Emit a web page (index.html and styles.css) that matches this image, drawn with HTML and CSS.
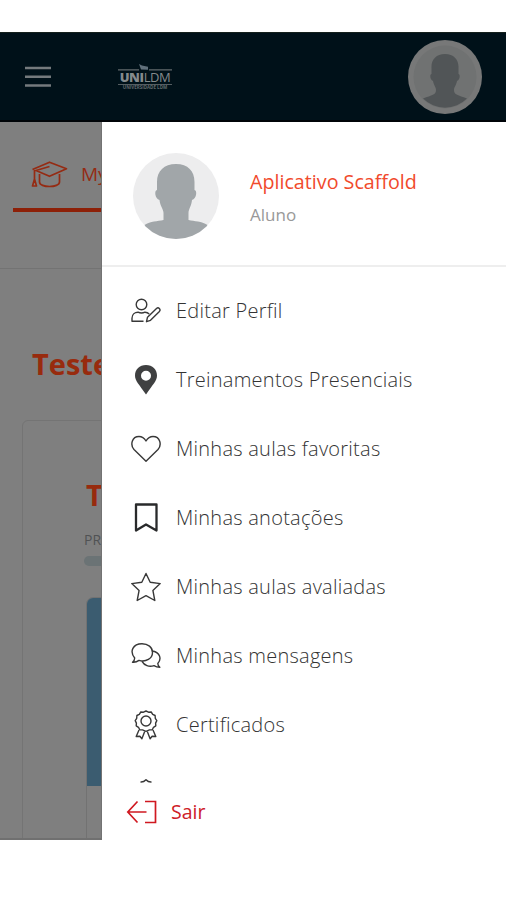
FILE: index.html
```html
<!DOCTYPE html>
<html lang="pt-BR">
<head>
<meta charset="utf-8">
<title>UNILDM</title>
<link rel="stylesheet" href="styles.css">
</head>
<body>
<div class="app">
  <header class="topbar">
    <svg class="burger" viewBox="0 0 26 22"><path d="M0 2h26M0 10.800h26M0 19.500h26"/></svg>
    <div class="brand">
      <svg class="brand-mark" viewBox="0 0 54 7"><path d="M0 5.800h21M31 5.800h23" stroke="#62696c" stroke-width="1.2"/><path d="M21 0l3 1.500 6 1.300v3l-7-.2z" fill="#60707b"/></svg>
      <div class="brand-name"><b>UNI</b><span>LDM</span></div>
      <div class="brand-sub">UNIVERSIDADE LDM</div>
    </div>
    <svg class="avatar-small" viewBox="0 0 74 74"><circle cx="37" cy="37" r="37" fill="#777878"/><circle cx="37" cy="37" r="31.500" fill="#707272"/><path d="M37 14c-9 0-14 6-13.500 14v6c-2 0-1.500 6 1.500 7 1 5 3 6 3 9 0 5-4 5-13 8.500a31 31 0 0 0 44 0C50 55 46 55 46 50c0-3 2-4 3-9 3-1 3.500-7 1.500-7v-6c.5-8-4.500-14-13.500-14z" fill="#515557"/></svg>
  </header>
  <div class="body">
    <main class="page">
      <div class="tab">
        <svg class="cap" viewBox="0 0 36 28"><path d="M1 8.500L18 1.200l17 6.600-17 7.500L4.500 9.500 18 5.500M3 9v9M3 18l-2 7h4zM8 13v8c0 6 20 6 20 0v-8"/></svg>
        <span>My</span>
      </div>
      <h1>Teste</h1>
      <section class="card">
        <h2>Teste</h2>
        <div class="progress-label">PROGRESSO</div>
        <div class="progress"></div>
        <div class="course"><div class="cover"></div></div>
      </section>
    </main>
    <aside class="drawer">
      <div class="profile">
        <svg class="avatar" viewBox="0 0 86 86"><defs><clipPath id="disc"><circle cx="43" cy="43" r="43"/></clipPath></defs><circle cx="43" cy="43" r="43" fill="#ededee"/><path clip-path="url(#disc)" d="M43 11C31 11 24 18 24 29v8c-3 0-2 9 2.500 10 .5 6 4 9 4 13v7c-6 1.500-13 1-19 5v14h63V72c-6-4-13-3.500-19-5v-7c0-4 3-7 3.500-13 4.500-1 5.500-10 2.500-10v-8c0-11-6.500-18-18.500-18z" fill="#a1a6a9"/></svg>
        <div><div class="name">Aplicativo Scaffold</div><div class="role">Aluno</div></div>
      </div>
      <nav class="menu">
        <a class="item"><svg viewBox="0 0 30 30"><circle cx="10.500" cy="8.500" r="5.300"/><path d="M12.500 25.200H1v-3c0-4 3-6 6-6 2 1 5 1 7 0 1.800 0 3.200.7 4.200 1.800M15.500 25.700l1-4.500 9-8.700c2-1.800 4.600.8 2.900 2.900l-8.900 8.900z"/></svg><span>Editar Perfil</span></a>
        <a class="item"><svg viewBox="0 0 30 30"><path fill="#3f4041" fill-rule="evenodd" stroke="none" d="M15 0C8.500 0 4 4.500 4 10.500 4 16 8 19 15 29.500 22 19 26 16 26 10.500 26 4.500 21.500 0 15 0zm0 5.800a5 5 0 1 1 0 10 5 5 0 0 1 0-10z"/></svg><span>Treinamentos Presenciais</span></a>
        <a class="item"><svg viewBox="0 0 30 30"><path d="M15 27.300L3 15.500C-1 11 .8 2.500 8 2.500c3.500 0 5.500 2 7 4.500 1.500-2.500 3.500-4.500 7-4.500 7.200 0 9 8.500 5 13z"/></svg><span>Minhas aulas favoritas</span></a>
        <a class="item"><svg viewBox="0 0 30 30"><path class="bold" d="M5 1.500h20.500v26L15 21.500 5 27.500z"/></svg><span>Minhas anotações</span></a>
        <a class="item"><svg viewBox="0 0 30 30"><path d="M15 1.500l4.200 8.700 10 1.400-7.300 6.800 1.900 10.100-8.800-4.800-8.800 4.800 1.900-10.100L.8 11.600l10-1.400z"/></svg><span>Minhas aulas avaliadas</span></a>
        <a class="item"><svg viewBox="0 0 30 30"><path d="M3.700 17C-1.800 10.500 2 2.700 11 2.700c6 0 10.500 3.600 10.500 8.700 0 6-6.500 10-13.500 8-2 1.500-4.300 2-6.500 1.800 1.500-1.200 2.200-2.500 2.200-4.200zM21.800 10c7 1.400 9.200 8 5 12.500 0 1.700.8 2.700 2 3.800-2 0-4-.5-5.800-1.700-5 1.700-9.800-.2-12-4.200"/></svg><span>Minhas mensagens</span></a>
        <a class="item"><svg viewBox="0 0 30 30"><path d="M15 1l2.500 1.200 2.700-.2 1.500 2.300 2.400 1.200.2 2.800 1.500 2.300-1.200 2.500.2 2.700-2.300 1.500-1.200 2.400-2.800.2L15 21.300l-3.500-1.400-2.800-.2-1.200-2.400-2.300-1.500.2-2.700-1.200-2.500 1.500-2.300.2-2.800 2.400-1.200L9.800 2l2.700.2z"/><circle cx="15" cy="11" r="5"/><path d="M8 20l-2.800 6.500 3.700-.3 2 2.600 2.800-7.300M22 20l2.800 6.500-3.700-.3-2 2.600-2.800-7.300"/></svg><span>Certificados</span></a>
        <a class="item"><svg viewBox="0 0 30 30"><path d="M9.500 3c3 .2 4-.6 5.500-2.300C16.500 2.400 17.500 3.200 20.500 3"/></svg></a>
      </nav>
      <a class="logout"><svg viewBox="0 0 30 24"><path d="M11 1.500L1.300 12 11 22.500M1.300 12H20M18.500 1.500H29v21H18.500"/></svg><span>Sair</span></a>
    </aside>
  </div>
</div>
</body>
</html>
```
FILE: styles.css
```css
* { box-sizing: border-box; }
body { margin: 0; background: #fff; font-family: "Open Sans", sans-serif; }
svg { display: block; flex: none; fill: none; }
.app { margin-top: 32px; height: 808px; width: 506px; overflow: hidden; }
.topbar { height: 90px; background: #001119; border-top: 1px solid #14201c; border-bottom: 2px solid #000408; display: flex; align-items: center; padding: 0 24px 0 25px; }
.burger { width: 26px; height: 22px; stroke: #747a7d; stroke-width: 2.6; }
.brand { width: 54px; margin-left: 67px; color: #858a8c; }
.brand-mark { width: 54px; height: 7px; }
.brand-name { display: flex; justify-content: center; font-size: 13px; line-height: 13px; letter-spacing: -.4px; border-bottom: 1px solid #555d61; }
.brand-name b { font-weight: 800; }
.brand-name span { font-weight: 400; }
.brand-sub { font-size: 4.500px; line-height: 5px; white-space: nowrap; text-align: center; font-weight: 700; color: #626a6e; }
.avatar-small { width: 74px; height: 74px; margin-left: auto; }
.body { height: 718px; display: flex; }
.page { width: 102px; flex: none; overflow: hidden; background: #7f7f7f; border-right: 1px solid #737373; border-bottom: 2px solid #707070; white-space: nowrap; }
.tab { margin-left: 13px; height: 90px; border-bottom: 4px solid #8d2008; display: flex; padding: 39px 0 0 18px; }
.cap { width: 37px; height: 28px; stroke: #952b13; stroke-width: 1.7; stroke-linejoin: round; }
.tab span { color: #952b13; font-size: 19px; line-height: 26px; margin-left: 13px; }
h1, h2 { margin: 0; color: #982b0e; font-weight: 700; }
h1 { border-top: 1px solid #737373; margin-top: 56px; padding: 75px 0 0 32px; font-size: 29px; line-height: 40px; }
.card { width: 300px; height: 500px; margin: 36px 0 0 22px; border: 1px solid #747474; border-radius: 6px; padding: 54px 0 0 61px; }
h2 { font-size: 29px; line-height: 40px; padding-left: 2px; }
.progress-label { font-size: 14px; line-height: 18px; margin-top: 16px; color: #505254; }
.progress { height: 10px; margin-top: 7px; border-radius: 5px; background: #6b7375; }
.course { margin: 31px 0 0 2px; height: 260px; border: 1px solid #727272; border-radius: 7px; }
.cover { height: 188px; background: #3b5c70; border-radius: 6px 0 0 0; }
.drawer { flex: 1; background: #fff; display: flex; flex-direction: column; }
.profile { height: 145px; border-bottom: 2px solid #eee; display: flex; padding: 31px 0 0 31px; }
.avatar { width: 86px; height: 86px; margin-right: 31px; }
.name { color: #f14a2c; font-size: 19.700px; line-height: 26px; margin-top: 16px; white-space: nowrap; }
.role { color: #999; font-size: 17px; line-height: 24px; margin-top: 8px; }
.menu { height: 516px; overflow: hidden; padding: 9px 0 0 29px; }
.item { height: 69px; display: flex; align-items: center; gap: 15px; color: #333; font-size: 20px; font-weight: 300; letter-spacing: .25px; white-space: nowrap; }
.item svg { width: 30px; height: 30px; stroke: #383838; stroke-width: 1.4; stroke-linejoin: round; }
.item .bold { stroke: #292a2b; stroke-width: 2.3; }
.logout { height: 57px; display: flex; align-items: center; gap: 14px; padding-left: 24px; color: #ce2028; font-size: 19.500px; }
.logout svg { width: 31px; height: 24px; stroke: #d01820; stroke-width: 1.7; }
```
